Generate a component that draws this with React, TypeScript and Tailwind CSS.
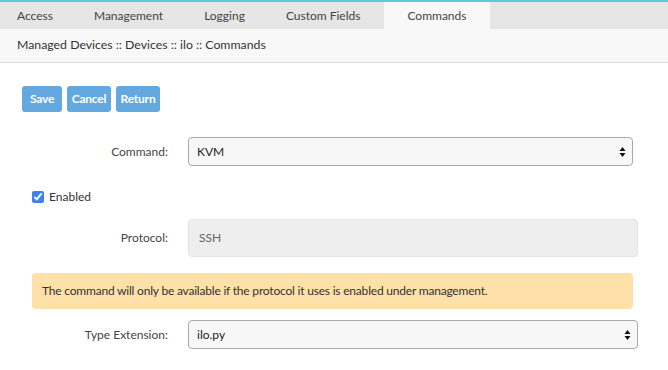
import React from 'react'

const tabs = ['Access', 'Management', 'Logging', 'Custom Fields', 'Commands']

const buttons = [
  { label: 'Save', w: 'w-[40px]' },
  { label: 'Cancel', w: 'w-[44px]' },
  { label: 'Return', w: 'w-[44px]' },
]

function SelectArrows() {
  return (
    <svg width="7" height="12" viewBox="0 0 7 12" className="absolute right-[6px] top-1/2 -translate-y-1/2">
      <path d="M3.5 1 L6.5 5 L0.5 5 Z" fill="#111" />
      <path d="M3.5 11 L6.5 7 L0.5 7 Z" fill="#111" />
    </svg>
  )
}

function Row({ label, children }: { label: string; children: React.ReactNode }) {
  return (
    <div className="flex items-center">
      <div className="w-[146px] text-right text-[12px] text-[#444]">{label}</div>
      <div className="ml-[20px] flex-1">{children}</div>
    </div>
  )
}

export default function App() {
  return (
    <div className="w-[668px] h-[370px] bg-white overflow-hidden" style={{ fontFamily: 'Lato, "Noto Sans", sans-serif' }}>
      <div className="h-[2px] bg-[#5ccbd2]" />
      <div className="flex h-[27px] bg-[#e6e6e6] text-[12px] text-[#444]">
        {tabs.map((t) => (
          <div
            key={t}
            className={
              t === 'Commands'
                ? 'flex items-center px-[23px] bg-[#f8f8f8]'
                : 'flex items-center px-[17px] mr-[7px]'
            }
          >
            {t}
          </div>
        ))}
      </div>
      <div className="h-[34px] bg-[#f8f8f8] border-b border-[#dcdcdc] flex items-center px-[17px] text-[12.3px] text-[#333]">
        Managed Devices :: Devices :: ilo :: Commands
      </div>

      <div className="pl-[22px] pr-[30px]">
        <div className="flex gap-[5px] mt-[23px]">
          {buttons.map((b) => (
            <button
              key={b.label}
              className={`${b.w} h-[26px] rounded-[3px] bg-[#64a8e0] text-white text-[12px] font-bold tracking-[-0.2px]`}
            >
              {b.label}
            </button>
          ))}
        </div>

        <div className="mt-[25px] pr-[5px]">
          <Row label="Command:">
            <div className="relative h-[29px] rounded-[4px] border border-[#a9a9a9] bg-[#f7f7f7] flex items-center pl-[8px] text-[12px] text-[#222]">
              KVM
              <SelectArrows />
            </div>
          </Row>
        </div>

        <div className="flex items-center mt-[22px] ml-[10px] gap-[5px] text-[12px] text-[#333]">
          <input type="checkbox" defaultChecked className="w-[12px] h-[12px] accent-[#3b82f6]" />
          <span>Enabled</span>
        </div>

        <div className="mt-[13px]">
          <Row label="Protocol:">
            <div className="h-[38px] rounded-[4px] border border-[#e4e4e4] bg-[#eeeeee] flex items-center pl-[10px] text-[12px] text-[#666]">
              SSH
            </div>
          </Row>
        </div>

        <div className="mt-[16px] ml-[10px] mr-[5px] h-[36px] rounded-[4px] bg-[#fde1a8] flex items-center pl-[10px] text-[12px] tracking-[-0.2px] text-[#333]">
          The command will only be available if the protocol it uses is enabled under management.
        </div>

        <div className="mt-[11px]">
          <Row label="Type Extension:">
            <div className="relative h-[29px] rounded-[4px] border border-[#a9a9a9] bg-[#f7f7f7] flex items-center pl-[8px] text-[12px] text-[#222]">
              ilo.py
              <SelectArrows />
            </div>
          </Row>
        </div>
      </div>
    </div>
  )
}
